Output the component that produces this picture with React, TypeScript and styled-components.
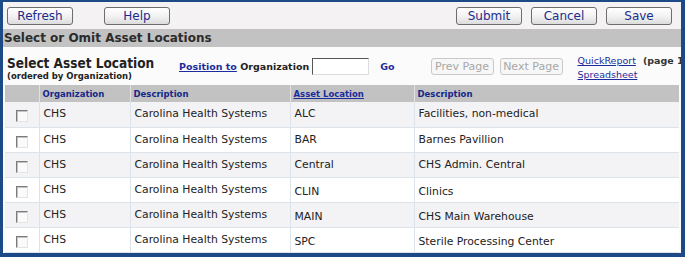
import React from "react";
import styled, { createGlobalStyle } from "styled-components";

const GlobalStyle = createGlobalStyle`
  html, body {
    margin: 0;
    padding: 0;
    background: #ffffff;
  }
  body {
    font-family: "DejaVu Sans", Verdana, sans-serif;
  }
`;

const Frame = styled.div`
  box-sizing: border-box;
  width: 685px;
  height: 257px;
  border-style: solid;
  border-color: #1d4a86;
  border-width: 2px 4px 4px 3px;
  background: #fbfbfb;
  overflow: hidden;
`;

const Toolbar = styled.div`
  display: flex;
  align-items: center;
  height: 27px;
  padding: 0 9px 0 4px;
  background: #f4f2f2;
`;

const Spacer = styled.div`
  flex: 1;
`;

const ToolButton = styled.button<{ $gap?: number }>`
  box-sizing: border-box;
  width: 66px;
  height: 18px;
  margin-left: ${(p) => p.$gap ?? 0}px;
  padding: 0;
  border: 1px solid #6d6d6d;
  border-radius: 3px;
  background: linear-gradient(#ffffff 0%, #f1f1f1 55%, #dcdcdc 100%);
  color: #1c2c8c;
  font-family: "DejaVu Sans", Verdana, sans-serif;
  font-size: 12px;
  line-height: 16px;
`;

const SectionBar = styled.div`
  height: 18px;
  padding-left: 1px;
  background: #c2c2c2;
  color: #2c2c2c;
  font-size: 12px;
  font-weight: bold;
  line-height: 18px;
`;

const FilterRow = styled.div`
  display: flex;
  align-items: flex-start;
  height: 38px;
  padding-left: 4px;
  white-space: nowrap;
  & > * {
    flex-shrink: 0;
  }
`;

const TitleBlock = styled.div`
  width: 172px;
  padding-top: 8px;
  color: #222;
  font-weight: bold;
`;

const Title = styled.div`
  font-family: "DejaVu Sans Condensed", "DejaVu Sans", sans-serif;
  font-size: 13.5px;
  line-height: 16px;
`;

const SubTitle = styled.div`
  font-size: 8.5px;
  line-height: 11px;
`;

const PositionGroup = styled.div`
  display: flex;
  align-items: center;
  padding-top: 11px;
  font-size: 9.5px;
  font-weight: bold;
  color: #222;
`;

const LinkText = styled.a<{ $plain?: boolean }>`
  color: #1c2c9c;
  text-decoration: ${(p) => (p.$plain ? "none" : "underline")};
  cursor: pointer;
`;

const PositionInput = styled.input`
  box-sizing: border-box;
  width: 57px;
  height: 17px;
  margin: 0 11px 0 3px;
  border-style: solid;
  border-width: 1px;
  border-color: #555 #ddd #ddd #555;
  background: #fff;
`;

const PagerGroup = styled.div`
  display: flex;
  gap: 6px;
  margin-left: 36px;
  padding-top: 11px;
`;

const PagerButton = styled.button`
  box-sizing: border-box;
  width: 63px;
  height: 17px;
  padding: 0;
  border: 1px solid #c9c9c9;
  border-radius: 3px;
  background: #f7f7f7;
  color: #a7a7a7;
  font-family: "DejaVu Sans", Verdana, sans-serif;
  font-size: 11px;
  line-height: 15px;
`;

const ReportLinks = styled.div`
  display: flex;
  flex-direction: column;
  margin-left: 15px;
  padding-top: 7px;
  font-size: 9.5px;
  line-height: 14px;
`;

const ReportLine = styled.div`
  display: flex;
`;

const PageNote = styled.span`
  margin-left: 7px;
  color: #333;
  font-weight: bold;
`;

const Table = styled.table`
  width: 674px;
  margin-left: 2px;
  border-collapse: collapse;
  table-layout: fixed;
`;

const Col = styled.col<{ $w?: number }>`
  width: ${(p) => (p.$w ? `${p.$w}px` : "auto")};
`;

const HeadRow = styled.tr`
  height: 17px;
  background: #c2c2c2;
`;

const HeadCell = styled.th`
  padding: 0 0 0 3px;
  border-left: 1px solid #e2e2e2;
  color: #14288a;
  font-size: 8.5px;
  font-weight: bold;
  text-align: left;
  vertical-align: middle;
  white-space: nowrap;
  &:first-child {
    border-left: none;
  }
`;

const Row = styled.tr<{ $odd: boolean }>`
  height: 25px;
  background: ${(p) => (p.$odd ? "#f3f2f4" : "#ffffff")};
  border-bottom: 1px solid #dde3ea;
`;

const Cell = styled.td<{ $shift?: number }>`
  padding: ${(p) => 5 + (p.$shift ?? 0)}px 0 0 4px;
  border-left: 1px solid #dde3ea;
  color: #222;
  font-size: 10.8px;
  line-height: 13px;
  vertical-align: top;
  white-space: nowrap;
  overflow: hidden;
`;

const CheckCell = styled.td`
  padding: 8px 0 0 11px;
  vertical-align: top;
`;

const Check = styled.span`
  display: block;
  box-sizing: border-box;
  width: 12px;
  height: 12px;
  border-style: solid;
  border-width: 1px;
  border-color: #7a7a7a #e4e4e4 #e4e4e4 #7a7a7a;
  box-shadow: inset 1px 1px 0 #c4c4c4;
  background: #fafafa;
`;

type Loc = { org: string; orgDesc: string; code: string; desc: string; shift?: number };

const rows: Loc[] = [
  { org: "CHS", orgDesc: "Carolina Health Systems", code: "ALC", desc: "Facilities, non-medical" },
  { org: "CHS", orgDesc: "Carolina Health Systems", code: "BAR", desc: "Barnes Pavillion" },
  { org: "CHS", orgDesc: "Carolina Health Systems", code: "Central", desc: "CHS Admin. Central" },
  { org: "CHS", orgDesc: "Carolina Health Systems", code: "CLIN", desc: "Clinics", shift: 2 },
  { org: "CHS", orgDesc: "Carolina Health Systems", code: "MAIN", desc: "CHS Main Warehouse", shift: 2 },
  { org: "CHS", orgDesc: "Carolina Health Systems", code: "SPC", desc: "Sterile Processing Center", shift: 2 },
];

export default function App() {
  return (
    <>
      <GlobalStyle />
      <Frame>
        <Toolbar>
          <ToolButton>Refresh</ToolButton>
          <ToolButton $gap={31}>Help</ToolButton>
          <Spacer />
          <ToolButton>Submit</ToolButton>
          <ToolButton $gap={9}>Cancel</ToolButton>
          <ToolButton $gap={9}>Save</ToolButton>
        </Toolbar>
        <SectionBar>Select or Omit Asset Locations</SectionBar>
        <FilterRow>
          <TitleBlock>
            <Title>Select Asset Location</Title>
            <SubTitle>(ordered by Organization)</SubTitle>
          </TitleBlock>
          <PositionGroup>
            <LinkText>Position to</LinkText>
            <span>&nbsp;Organization</span>
            <PositionInput />
            <LinkText $plain>Go</LinkText>
          </PositionGroup>
          <PagerGroup>
            <PagerButton disabled>Prev Page</PagerButton>
            <PagerButton disabled>Next Page</PagerButton>
          </PagerGroup>
          <ReportLinks>
            <ReportLine>
              <LinkText>QuickReport</LinkText>
              <PageNote>(page 1 of 1)</PageNote>
            </ReportLine>
            <ReportLine>
              <LinkText>Spreadsheet</LinkText>
            </ReportLine>
          </ReportLinks>
        </FilterRow>
        <Table>
          <colgroup>
            <Col $w={34} />
            <Col $w={91} />
            <Col $w={160} />
            <Col $w={124} />
            <Col />
          </colgroup>
          <thead>
            <HeadRow>
              <HeadCell />
              <HeadCell>Organization</HeadCell>
              <HeadCell>Description</HeadCell>
              <HeadCell>
                <LinkText>Asset Location</LinkText>
              </HeadCell>
              <HeadCell>Description</HeadCell>
            </HeadRow>
          </thead>
          <tbody>
            {rows.map((r, i) => (
              <Row key={r.code} $odd={i % 2 === 0}>
                <CheckCell>
                  <Check />
                </CheckCell>
                <Cell>{r.org}</Cell>
                <Cell>{r.orgDesc}</Cell>
                <Cell $shift={r.shift}>{r.code}</Cell>
                <Cell $shift={r.shift}>{r.desc}</Cell>
              </Row>
            ))}
          </tbody>
        </Table>
      </Frame>
    </>
  );
}
